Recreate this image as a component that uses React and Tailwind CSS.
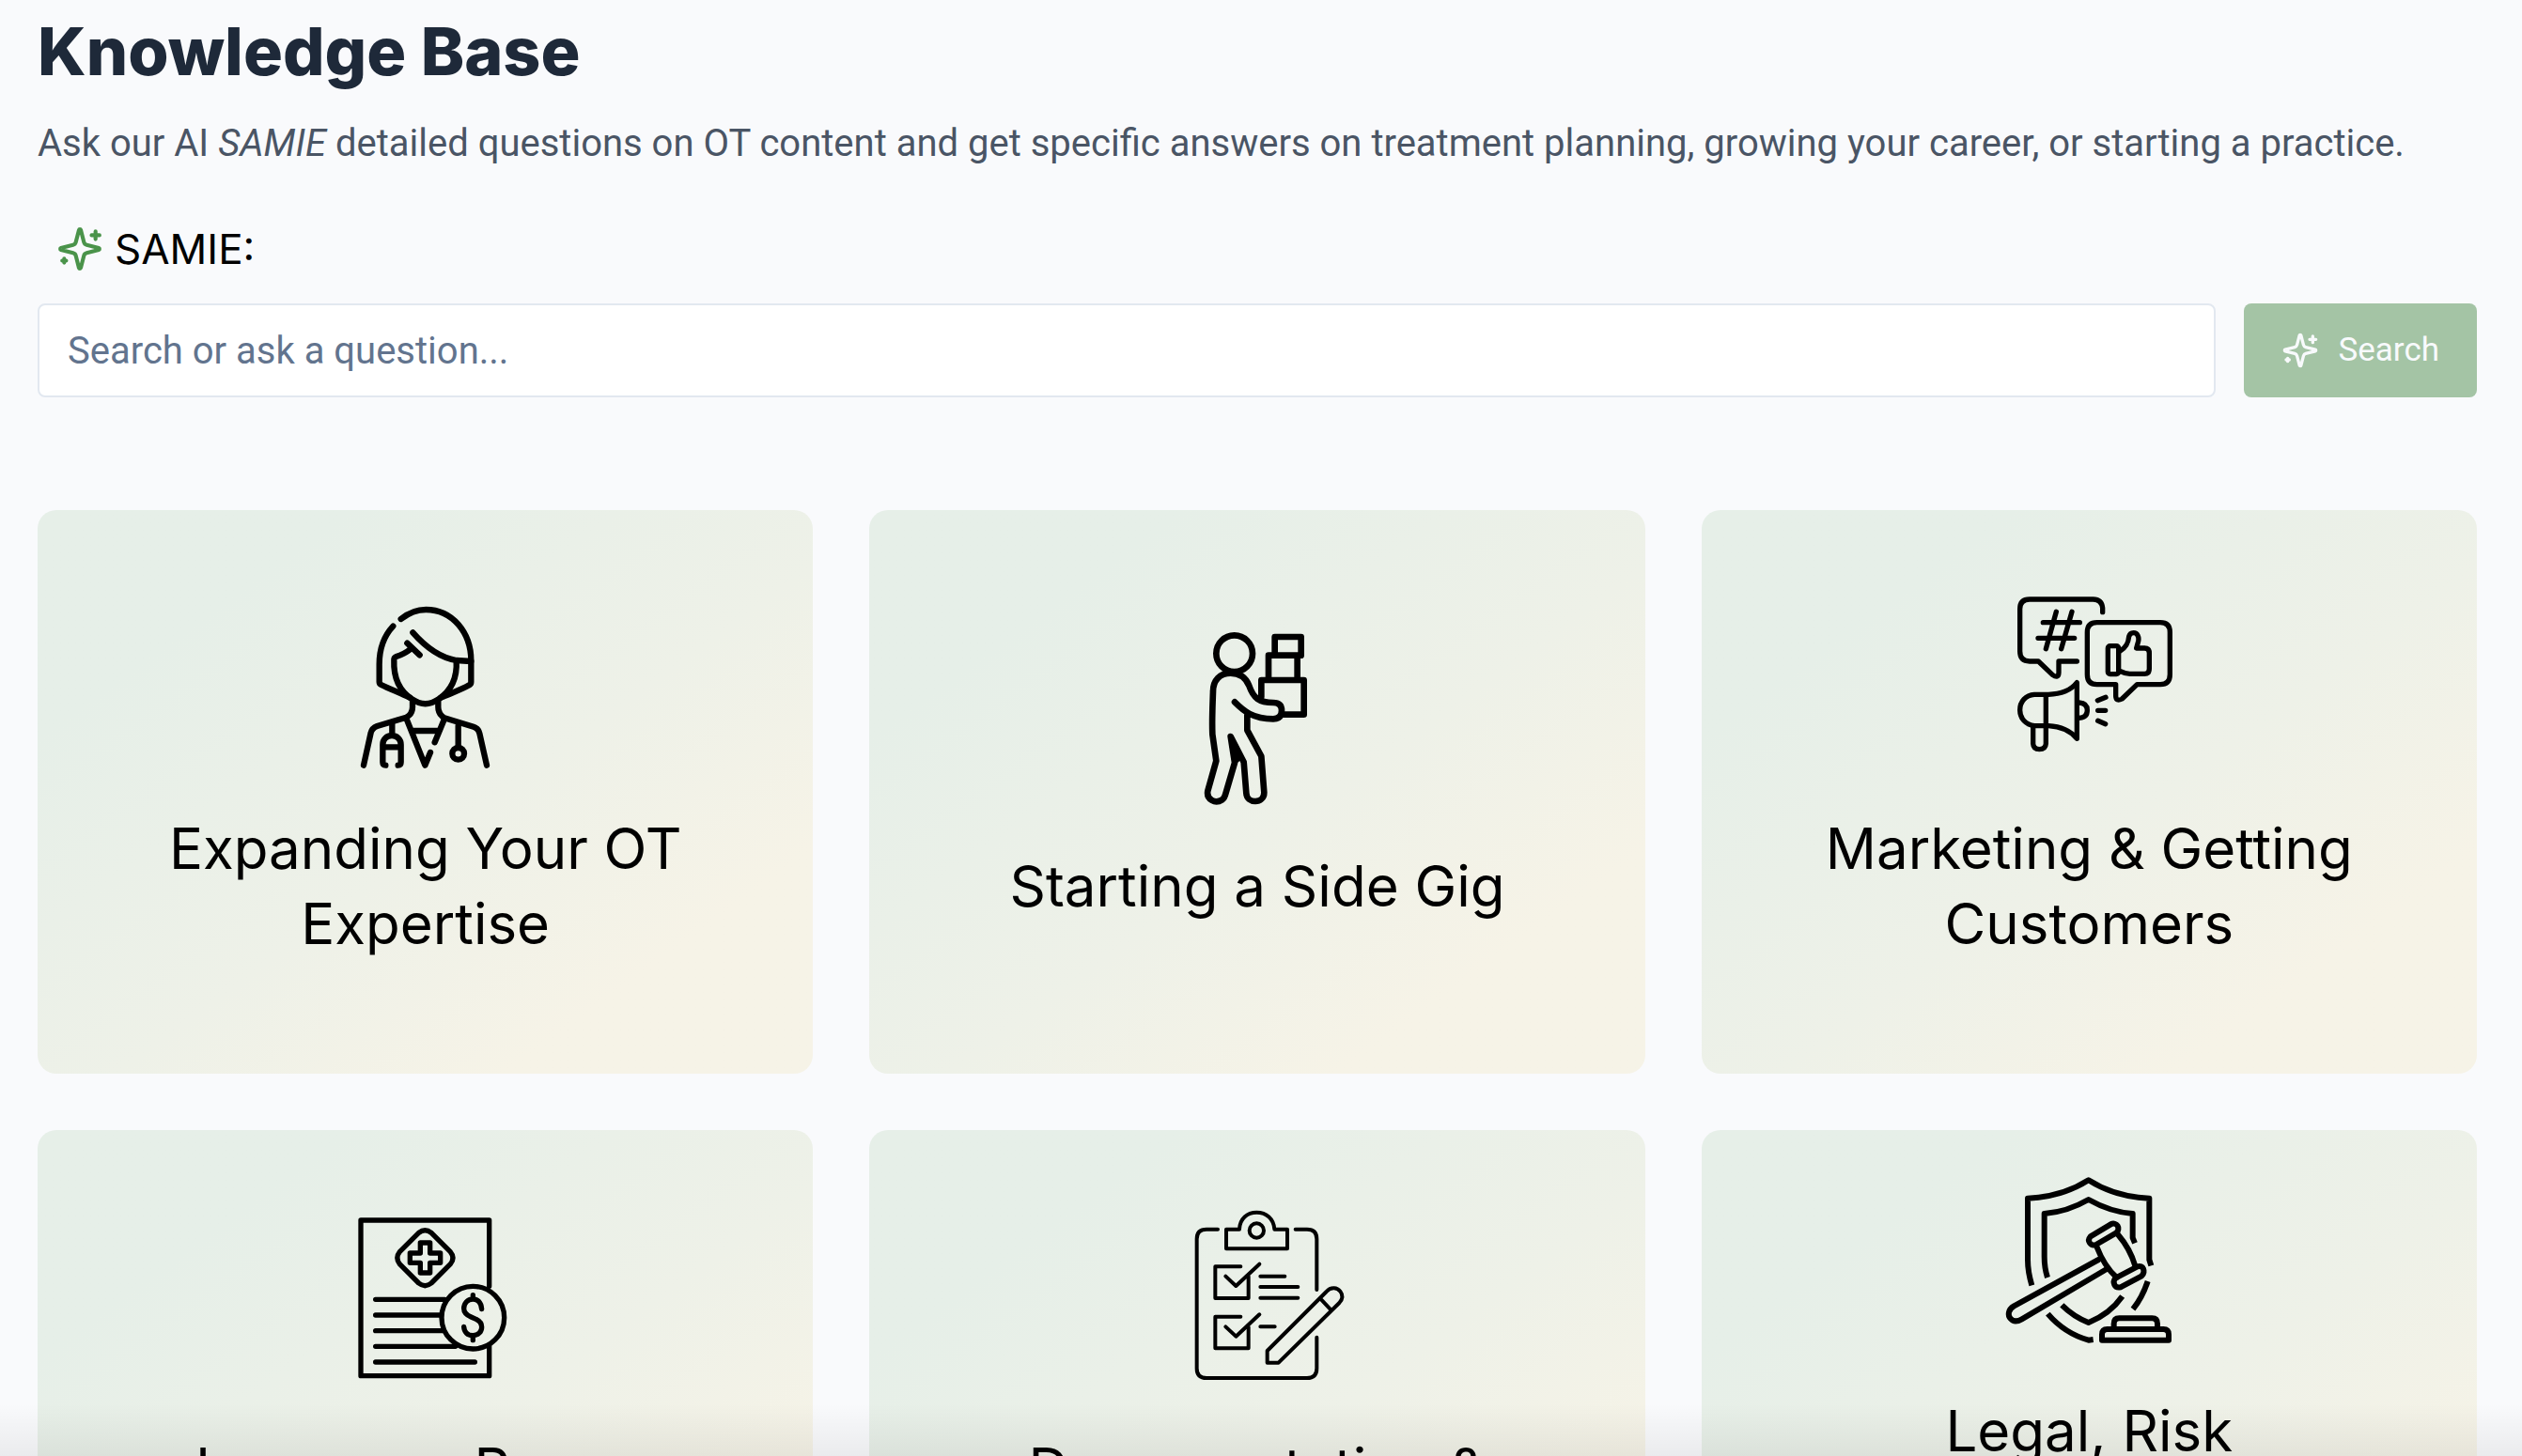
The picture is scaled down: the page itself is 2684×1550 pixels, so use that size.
function Sparkles({ className }) {
  return (
    <svg viewBox="0 0 24 24" fill="none" stroke="currentColor" strokeWidth="2" strokeLinecap="round" strokeLinejoin="round" className={className} aria-hidden="true">
      <path d="M9.937 15.5A2 2 0 0 0 8.5 14.063l-6.135-1.582a.5.5 0 0 1 0-.962L8.5 9.936A2 2 0 0 0 9.937 8.5l1.582-6.135a.5.5 0 0 1 .963 0L14.063 8.5A2 2 0 0 0 15.5 9.937l6.135 1.581a.5.5 0 0 1 0 .964L15.5 14.063a2 2 0 0 0-1.437 1.437l-1.582 6.135a.5.5 0 0 1-.963 0z" />
      <path d="M20 3v4M22 5h-4M4 17v2M5 18H3" />
    </svg>
  );
}

function CardIcon({ viewBox, strokeWidth, children }) {
  return (
    <svg viewBox={viewBox} fill="none" stroke="#000" strokeWidth={strokeWidth} strokeLinecap="round" strokeLinejoin="round" className="size-60 shrink-0" aria-hidden="true">
      {children}
    </svg>
  );
}

function ClinicianIcon() {
  return (
    <CardIcon viewBox="-21 9 720 720" strokeWidth="19">
      <path d="M260 117C284 98 312 87 340 87C424 87 484 160 484 250V318Q484 325 478 328C450 344 420 354 388 368" />
      <path d="M235 140C205 172 191 215 191 262V318Q191 324 197 327C225 341 255 352 288 368" />
      <path d="M298 160C340 208 385 240 437 249L484 252" />
      <path d="M280 194L320 232M292 212C280 222 262 232 243 238Q238 240 238 247C236 300 252 345 296 373Q338 402 380 373C422 345 440 300 437 250" />
      <path d="M297 376V398Q297 420 277 431L184 459Q168 465 164 480L141 584" />
      <path d="M379 376V398Q379 420 399 433L492 461Q507 466 511 482L534 584" />
      <path d="M277 434L337 584L354 543M399 436L368 511M297 474H382" />
      <path d="M232 452V486M211 584Q202 584 202 574V518A29 29 0 0 1 260 518V574Q260 584 251 584M202 526H260" />
      <path d="M443 458V526" />
      <circle cx="443" cy="547" r="19" />
    </CardIcon>
  );
}

function CarrierIcon() {
  return (
    <CardIcon viewBox="-66 39 720 720" strokeWidth="20">
      <circle cx="221" cy="137" r="58" />
      <path d="M350 143V84H434V143H330V222M422 150V222M307 275V222H443V332H375" />
      <path d="M222 292C250 320 280 346 345 346Q372 346 372 319Q372 294 345 294C300 294 282 280 268 240C256 210 236 200 209 200C175 200 153 222 153 258C151 310 149 350 151 395L163 480L136 576C131 604 160 618 182 604Q190 598 193 585L222 486L209 402L251 484L259 583C261 618 316 618 316 581L307 465L262 382V334" />
      <path d="M209 402L222 486L240 470Z" fill="#000" strokeWidth="12" />
    </CardIcon>
  );
}

function MarketingIcon() {
  return (
    <CardIcon viewBox="-51 39 720 720" strokeWidth="16">
      <path d="M353 125V112Q350 84 323 84H120Q89 84 89 115V250Q89 282 120 282H148L193 325Q212 338 213 318V282H271" />
      <path d="M205 124L172 242M255 124L221 242M163 158H280M147 208H263" />
      <path d="M335 158H537Q568 158 568 189V324Q568 356 537 356H463L415 402Q396 412 395 393V356H335Q304 356 304 324V189Q304 158 335 158Z" />
      <rect x="370" y="233" width="34" height="90" rx="7" />
      <path d="M410 248C430 236 435 222 437 203Q440 191 452 191C464 191 470 204 467 218L461 240H487Q502 240 502 255V305Q502 322 487 322H440Q425 322 410 314" />
      <path d="M172 390V488M180 388C220 387 252 374 271 350V529C252 506 220 490 180 488H135C108 484 89 465 89 438C89 410 108 390 135 388H180" />
      <path d="M131 490V545Q132 563 151 563Q171 563 172 545V490M278 414Q304 416 304 438Q304 462 278 463M337 407L363 397M338 439H362M338 472L362 482" />
    </CardIcon>
  );
}

function InsuranceIcon() {
  return (
    <CardIcon viewBox="-51 41 720 720" strokeWidth="16">
      <path d="M512 300V89H102V586H512V490" />
      <path d="M287 129Q307 113 327 129L388 190Q404 209 388 229L327 290Q307 306 287 290L226 229Q211 209 226 190Z" />
      <path d="M292 161H323V194H356V225H323V257H292V225H259V194H292Z" />
      <path d="M149 342H370M149 392H356M149 442H366M149 492H404M149 542H466" />
      <circle cx="460" cy="400" r="100" />
      <path d="M460 328V340M460 460V472M488 373C486 350 474 341 460 341C442 341 431 355 431 371C431 385 440 392 454 398L470 405C482 411 488 419 488 430C488 446 476 457 460 457C443 457 432 447 431 429" />
    </CardIcon>
  );
}

function DocumentationIcon() {
  return (
    <CardIcon viewBox="-66 41 720 720" strokeWidth="12">
      <path d="M168 118H132Q101 118 101 149V562Q101 593 132 593H453Q484 593 484 562V463M416 118H453Q484 118 484 149V311" />
      <path d="M237 118C238 84 262 64 292 64C323 64 347 84 349 118H390V180H195V118Z" />
      <circle cx="292" cy="122" r="23" />
      <path d="M241 237H160V338H266V268M193 268L226 299L301 229" />
      <path d="M241 397H160V498H266V430M193 429L226 460L301 390" />
      <path d="M304 268H382M304 302H424M304 337H424M304 429H350" />
      <path d="M326 506L515 317C530 300 550 305 559 316C568 328 567 341 556 353L362 544H326ZM496 340L529 375" />
    </CardIcon>
  );
}

function LegalIcon() {
  return (
    <CardIcon viewBox="-21 41 720 720" strokeWidth="18">
      <g strokeLinecap="butt">
        <path d="M157 417C149 390 144 365 144 335V139C215 136 280 118 338 81C396 118 460 136 532 139V335L538 354" />
        <path d="M207 392C200 370 197 350 197 325V188C248 184 295 168 338 143C382 168 428 184 479 188V265L486 282" />
        <path d="M253 480C278 505 306 523 338 536C382 518 418 492 446 452M208 508C244 550 285 577 338 592L353 590M527 404C515 440 500 468 480 493" />
      </g>
      <path d="M344 261L409 222C428 213 442 235 427 249L362 287C344 293 332 275 344 261Z" />
      <path d="M424 394L494 357C513 350 521 373 508 387L440 423C421 427 413 407 424 394Z" />
      <path d="M364 293C380 335 400 367 428 392M432 255C458 285 476 318 487 355" />
      <path d="M370 335L100 483C80 495 80 513 89 523C99 535 113 532 125 525L396 365" />
      <path d="M381 592V574Q381 557 398 557H577Q594 557 594 574V592ZM419 552V540Q419 522 436 522H541Q558 522 558 540V552" />
    </CardIcon>
  );
}

const topics = [
  { title: "Expanding Your OT Expertise", Icon: ClinicianIcon },
  { title: "Starting a Side Gig", Icon: CarrierIcon },
  { title: "Marketing & Getting Customers", Icon: MarketingIcon },
  { title: "Insurance Payers Contracts", Icon: InsuranceIcon },
  { title: "Documentation & Compliance", Icon: DocumentationIcon },
  { title: "Legal, Risk Management & Compliance", Icon: LegalIcon },
];

export default function App() {
  return (
    <div className="relative h-screen overflow-hidden bg-[#f9fafc] font-['Roboto',sans-serif] text-black">
      <main className="pt-[15px] pr-12 pl-10">
        <h1 className="font-['Inter',sans-serif] text-[70px] leading-[80px] font-extrabold text-gray-800">Knowledge Base</h1>
        <p className="mt-7 text-[40px] leading-[60px] text-gray-600">
          Ask our AI <em>SAMIE</em> detailed questions on OT content and get specific answers on treatment planning, growing your career, or starting a practice.
        </p>
        <form className="mt-13" onSubmit={(e) => e.preventDefault()}>
          <label htmlFor="question" className="flex items-center gap-3 pl-5 font-['Inter',sans-serif] text-[44px] leading-[60px]">
            <Sparkles className="size-[50px] text-[#4a934a]" />
            SAMIE:
          </label>
          <div className="mt-7 flex gap-[30px]">
            <input
              id="question"
              type="text"
              placeholder="Search or ask a question..."
              className="h-[100px] min-w-0 flex-1 rounded-lg border-2 border-slate-200 bg-white px-[30px] text-[40px] outline-none placeholder:text-slate-500"
            />
            <button type="submit" className="flex h-[100px] items-center gap-5 rounded-lg bg-[#a4c4a5] px-10 text-[35px] text-slate-50">
              <Sparkles className="size-10" />
              Search
            </button>
          </div>
        </form>
        <section className="mt-30 grid grid-cols-3 gap-[60px]" aria-label="Topics">
          {topics.map(({ title, Icon }) => (
            <a key={title} href="#" className="flex h-[600px] flex-col items-center justify-center rounded-[20px] bg-linear-to-br from-[#e6efe8] from-20% via-[#eef1e8] via-55% to-[#f6f3e7] to-80% px-20 pb-10 text-center">
              <Icon />
              <h2 className="font-['Inter',sans-serif] text-[60px] leading-[80px]">{title}</h2>
            </a>
          ))}
        </section>
      </main>
      <div className="pointer-events-none absolute inset-x-0 bottom-0 h-14 bg-linear-to-b from-transparent to-black/6" />
    </div>
  );
}
